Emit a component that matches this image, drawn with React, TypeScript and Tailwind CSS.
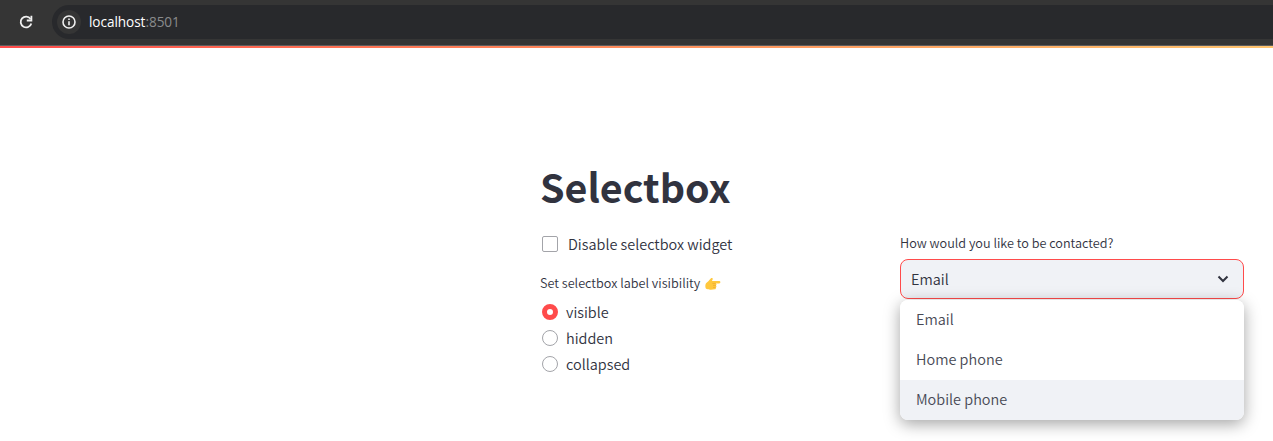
import { useState } from "react";

const sans = "font-['Noto_Sans_CJK_JP','Noto_Sans_CJK_SC',sans-serif]";

function BrowserBar() {
  return (
    <header className="flex h-[46px] items-start border-b border-[#5c5c5c] bg-[#353535] pt-[5px]">
      <button aria-label="Reload" className="ml-[18px] mt-[9px] h-4 w-4">
        <svg viewBox="0 0 16 16" className="h-4 w-4" fill="none" stroke="#f0f0f0" strokeWidth="1.8">
          <path d="M12.500 4.900A5.400 5.400 0 1 0 13.300 9.400" />
          <path d="M13.400 1.800v4.700H8.800" />
        </svg>
      </button>
      <div className="ml-[18px] flex h-[34px] flex-1 items-center rounded-l-full bg-[#28292c] pl-[5px]">
        <span className="flex h-6 w-6 items-center justify-center rounded-full bg-[#353535]">
          <svg viewBox="0 0 14 14" className="h-[14px] w-[14px]" fill="none" stroke="#f0f0f0" strokeWidth="1.6">
            <circle cx="7" cy="7" r="6" />
            <path d="M7 6.200v4M7 3.600v1.500" />
          </svg>
        </span>
        <span className="ml-2 font-['Open_Sans',sans-serif] text-[13.6px] font-normal leading-5 tracking-[-0.06px] text-white">
          localhost<span className="text-[#8a8b8d]">:8501</span>
        </span>
      </div>
    </header>
  );
}

function PointingHand() {
  return (
    <svg viewBox="0 0 16 14" className="ml-[5px] mt-px h-[14px] w-4" role="img" aria-label="pointing right">
      <path
        d="M1 6.200C2.600 5.300 4 3.400 6 1.300c.8-.8 2-.1 1.700.9L7 4h7.200c1.600 0 1.600 2.400 0 2.400h-3.500c1 .3 1.100 1.600.2 2 .8.5.7 1.700-.2 2 .5.8 0 1.800-.9 1.900L6 12.700c-1.800.2-3.200-.4-5-.9C.1 10.500.1 7.500 1 6.200z"
        fill="#ffc83d"
      />
      <path d="M10.700 6.400H7.400M10.900 8.400H8M10.700 10.400H8" stroke="#e8a32c" strokeWidth=".6" fill="none" />
    </svg>
  );
}

const visibilities = ["visible", "hidden", "collapsed"];
const contacts = ["Email", "Home phone", "Mobile phone"];

export default function App() {
  const [visibility, setVisibility] = useState("visible");
  const [contact, setContact] = useState("Email");
  return (
    <div className={`h-[441px] overflow-hidden bg-white font-[350] text-[#31333f] ${sans}`}>
      <BrowserBar />
      <div className="h-[2px] bg-linear-to-r from-[#ff4b4b] to-[#ffc46e]" />
      <main className="ml-[540px] w-[704px] pt-[111px]">
        <h1 className="h-[53px] text-[39.4px] font-bold leading-[53px]">Selectbox</h1>
        <div className="mt-[20px] flex justify-between">
          <section className="w-[344px]">
            <label className="flex h-6 items-center">
              <span className="ml-[2px] h-4 w-4 rounded-[2px] border border-[#a3a4a9]" />
              <span className="ml-[10px] text-[14.46px] leading-6">Disable selectbox widget</span>
            </label>
            <div className="mt-[17px] flex h-5 items-center text-[12.66px] leading-5">
              Set selectbox label visibility
              <PointingHand />
            </div>
            <div className="mt-[6px] flex flex-col">
              {visibilities.map((v) => (
                <button key={v} onClick={() => setVisibility(v)} className="flex h-[26px] items-center">
                  <span
                    className={
                      v === visibility
                        ? "ml-[2px] h-4 w-4 rounded-full border-[5px] border-[#ff4b4b] bg-white"
                        : "ml-[2px] h-4 w-4 rounded-full border border-[#a3a4a9]"
                    }
                  />
                  <span className="ml-2 pb-px text-[14.46px] leading-6">{v}</span>
                </button>
              ))}
            </div>
          </section>
          <section className="w-[344px]">
            <div className="h-[21px] pt-px text-[12.66px] leading-5">How would you like to be contacted?</div>
            <div className="mt-[6px] flex h-10 items-center justify-between rounded-lg border border-[#ff4b4b] bg-[#f0f2f6] pl-[10px] pr-[14px]">
              <span className="text-[14.46px] leading-6">{contact}</span>
              <svg viewBox="0 0 12 8" className="h-2 w-3" fill="none" stroke="#31333f" strokeWidth="2">
                <path d="M1.500 1.500 6 6l4.500-4.500" />
              </svg>
            </div>
            <ul className="mt-px h-[120px] overflow-hidden rounded-lg bg-white shadow-[0_4px_16px_rgba(0,0,0,0.36)]">
              {contacts.map((c) => (
                <li
                  key={c}
                  onClick={() => setContact(c)}
                  className={`flex h-10 items-center pb-[2px] pl-4 text-[14.46px] leading-6 text-[#484a55] ${c === "Mobile phone" ? "bg-[#f0f2f6]" : "bg-white"}`}
                >
                  {c}
                </li>
              ))}
            </ul>
          </section>
        </div>
      </main>
    </div>
  );
}
